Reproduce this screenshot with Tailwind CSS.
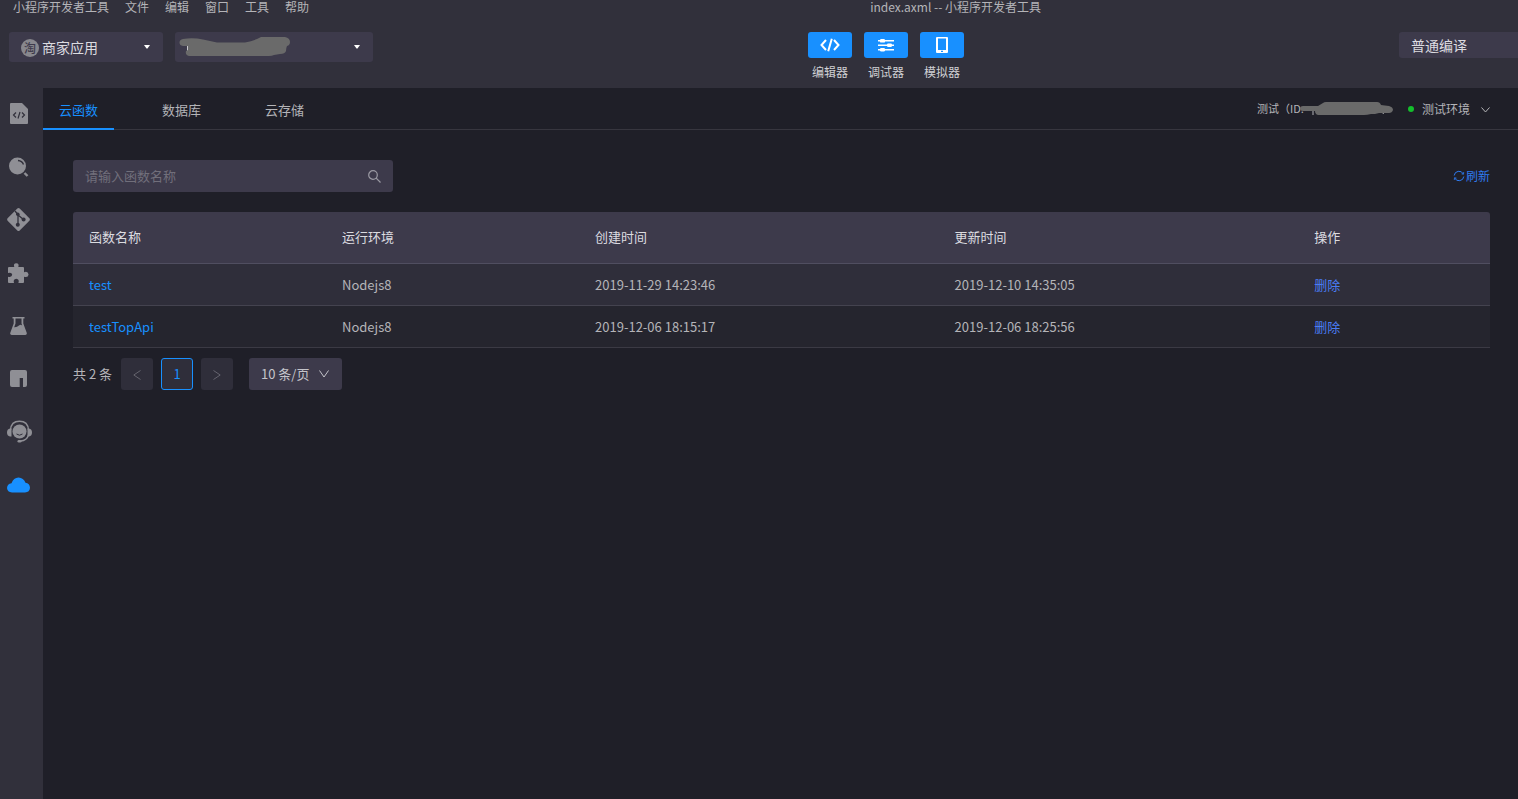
<!DOCTYPE html>
<html lang="zh-CN">
<head>
<meta charset="utf-8">
<meta name="viewport" content="width=device-width, initial-scale=1">
<title>index.axml -- 小程序开发者工具</title>
<script src="https://cdn.jsdelivr.net/npm/@tailwindcss/browser@4"></script>
</head>
<body class="flex min-h-screen flex-col bg-[#31303b] font-['Noto_Sans_CJK_SC',sans-serif] text-[13px] text-[#b4b4b8]">

<header class="flex h-[88px] shrink-0 flex-col">
  <div class="flex h-8 items-start">
    <nav aria-label="主菜单" class="flex flex-1 gap-4 pl-[13px] text-xs leading-[13px]">
      <button type="button">小程序开发者工具</button>
      <button type="button">文件</button>
      <button type="button">编辑</button>
      <button type="button">窗口</button>
      <button type="button">工具</button>
      <button type="button">帮助</button>
    </nav>
    <h1 class="mr-[477px] text-xs leading-[13px]">index.axml -- 小程序开发者工具</h1>
  </div>

  <div class="grid grid-cols-[808fr_156px_554fr] items-start">
    <div class="flex gap-3 pl-[9px]">
      <div class="relative">
        <select aria-label="应用类型" class="h-[30px] w-[154px] appearance-none rounded-[3px] bg-[#3d3a4b] pl-[33px] text-sm text-[#dcdce0]">
          <option>商家应用</option>
        </select>
        <span class="pointer-events-none absolute top-[7px] left-3 flex size-[18px] items-center justify-center rounded-full bg-[#88888e] text-xs leading-none font-medium text-[#3d3a4b]">淘</span>
        <svg class="pointer-events-none absolute top-[13px] right-[13px]" width="6" height="4" viewBox="0 0 6 4" fill="#fff"><path d="M0 0h6L3.500 3.500h-1z"/></svg>
      </div>
      <div class="relative">
        <select aria-label="项目" class="h-[30px] w-[198px] appearance-none rounded-[3px] bg-[#3d3a4b] pl-3 text-sm text-[#dcdce0]">
          <option></option>
        </select>
        <svg class="pointer-events-none absolute top-[5px] left-1" width="112" height="20" viewBox="0 0 112 20"><path d="M8.500 8v6" fill="none" stroke="#c8c8cc"/><path d="M4 2q10-1.500 20 .5l14 3h28q7-1.500 12-3.500l4-2h24q5 1 5 5 0 3-3 4-1 2-1 5-1 3-6 3l-6 1q-2 1-5 1H10q-4-1-3-5l2-1V9H4Q.5 8.500.5 5.500T4 2z" fill="#6a6a6a"/></svg>
        <svg class="pointer-events-none absolute top-[13px] right-[13px]" width="6" height="4" viewBox="0 0 6 4" fill="#fff"><path d="M0 0h6L3.500 3.500h-1z"/></svg>
      </div>
    </div>

    <div class="flex gap-3 text-xs text-[#d0d0d4]">
      <button type="button" class="flex w-11 flex-col items-center gap-[5px]">
        <span class="flex h-[26px] w-11 items-center justify-center rounded-[3px] bg-[#1890ff]">
          <svg width="20" height="14" viewBox="0 0 20 14" fill="none" stroke="#fff" stroke-width="2"><path d="M6 2L1.500 7 6 12M14 2l4.500 5-4.500 5M11.800 .8L8.200 13.200"/></svg>
        </span>
        <span class="leading-[18px]">编辑器</span>
      </button>
      <button type="button" class="flex w-11 flex-col items-center gap-[5px]">
        <span class="flex h-[26px] w-11 items-center justify-center rounded-[3px] bg-[#1890ff]">
          <svg width="16" height="14" viewBox="0 0 16 14" fill="#fff"><path d="M0 2h16v1.500H0zM0 6.500h16V8H0zM0 11h16v1.500H0z"/><rect x="2" y="1" width="5" height="3.600" rx="1.200"/><rect x="9" y="5.400" width="5" height="3.600" rx="1.200"/><rect x="2" y="9.900" width="5" height="3.600" rx="1.200"/></svg>
        </span>
        <span class="leading-[18px]">调试器</span>
      </button>
      <button type="button" class="flex w-11 flex-col items-center gap-[5px]">
        <span class="flex h-[26px] w-11 items-center justify-center rounded-[3px] bg-[#1890ff]">
          <svg width="12" height="16" viewBox="0 0 12 16"><path fill="#fff" fill-rule="evenodd" d="M1 0h10q1 0 1 1v14q0 1-1 1H1q-1 0-1-1V1q0-1 1-1zM2 1.500V13h8V1.500zM5 13.800v1.200h2v-1.200z"/></svg>
        </span>
        <span class="leading-[18px]">模拟器</span>
      </button>
    </div>

    <div class="flex justify-end">
      <select aria-label="编译模式" class="h-[26px] w-[119px] appearance-none rounded-l-[3px] bg-[#3d3a4b] pl-3 text-sm text-[#dcdce0]">
        <option>普通编译</option>
      </select>
    </div>
  </div>
</header>

<div class="flex flex-1">
  <aside class="w-[43px] shrink-0">
    <nav aria-label="侧边栏" class="flex flex-col text-[#8f8f95]">
      <button type="button" aria-label="代码" class="flex h-[53px] items-center pb-0.5 pl-2.5">
        <svg width="18" height="21" viewBox="0 0 18 21"><path fill="currentColor" d="M1 0h11l6 6v14q0 1-1 1H1q-1 0-1-1V1q0-1 1-1z"/><path d="M6 9.500L3.500 12 6 14.500M12 9.500l2.500 2.500-2.500 2.500M10 9l-2 6.500" fill="none" stroke="#31303b" stroke-width="1.200"/></svg>
      </button>
      <button type="button" aria-label="搜索" class="flex h-[53px] items-center pb-0.5 pl-[9px]">
        <svg width="20" height="20" viewBox="0 0 20 20"><circle cx="8.500" cy="9" r="8.500" fill="currentColor"/><path d="M9 3.500q4 .3 5.500 4" fill="none" stroke="#31303b" stroke-width="1.400"/><path d="M15.500 16l3 3" stroke="currentColor" stroke-width="2.400"/></svg>
      </button>
      <button type="button" aria-label="Git" class="flex h-[53px] items-center pb-0.5 pl-[7px]">
        <svg width="23" height="23" viewBox="0 0 23 23"><path fill="currentColor" d="M10.300 .6q1.200-1 2.400 0l9.700 9.700q1 1.200 0 2.400l-9.700 9.700q-1.200 1-2.400 0L.6 12.700q-1-1.200 0-2.400z"/><path d="M8 3l3 3.500V17M11 7l5.500 4.500" fill="none" stroke="#31303b" stroke-width="1.300"/><g fill="#31303b"><circle cx="10.800" cy="6.300" r="1.800"/><circle cx="10.800" cy="16.800" r="2"/><circle cx="16.600" cy="11.600" r="2"/></g></svg>
      </button>
      <button type="button" aria-label="扩展" class="flex h-[53px] items-center pb-0.5 pl-2">
        <svg width="21" height="20" viewBox="0 0 21 20" fill="currentColor"><path d="M0 5q0-1 1-1h5.300Q5 .5 8.300 .2q3.200.3 2 3.800H15q1 0 1 1v4.200q4-1.400 4.600 2.300-.5 3.600-4.600 2.200V19q0 1-1 1h-4.600q1.300-3.800-2.100-4.200-3.500.4-2.300 4.200H1q-1 0-1-1v-5.300q3.800 1 4.200-1.900Q3.800 8.800 0 10z"/></svg>
      </button>
      <button type="button" aria-label="实验" class="flex h-[53px] items-center pb-0.5 pl-2.5">
        <svg width="17" height="18" viewBox="0 0 17 18"><path fill="currentColor" d="M2.500 0h12v1.500h-1.200v5l3.500 9.500q.3 2-1.500 2H1.700q-1.800 0-1.500-2l3.500-9.500v-5H2.500z"/><path fill="#31303b" d="M5.500 1.500h6v5l.7 2q-1.800-1.600-3.200 0-2.200 2-4.800 1.700l1.300-3.700z"/></svg>
      </button>
      <button type="button" aria-label="npm" class="flex h-[53px] items-center pb-0.5 pl-2.5">
        <svg width="17" height="17" viewBox="0 0 17 17"><path fill="currentColor" d="M2 0h13q2 0 2 2v13q0 2-2 2h-2V8H9.700v9H2q-2 0-2-2V2q0-2 2-2z"/></svg>
      </button>
      <button type="button" aria-label="客服" class="flex h-[53px] items-center pb-0.5 pl-[7px]">
        <svg width="25" height="23" viewBox="0 0 25 23"><circle cx="12.500" cy="11.500" r="7" fill="currentColor"/><path d="M3.500 10Q4 1.200 12.500 1.200T21.500 10M21.500 15q-1.500 5.500-8 6" fill="none" stroke="currentColor" stroke-width="1.400"/><path fill="currentColor" d="M4.500 8.500v8H3Q0 16 0 12.500t3-4zM20.500 8.500v8H22q3-.5 3-4t-3-4z"/><rect x="10.500" y="20" width="4" height="2.600" rx="1.300" fill="currentColor"/><path d="M9.500 14q3 2.400 6 0" fill="none" stroke="#31303b"/></svg>
      </button>
      <button type="button" aria-label="云服务" class="flex h-[53px] items-center pb-0.5 pl-[7px] text-[#1890ff]">
        <svg width="23" height="16" viewBox="0 0 23 16" fill="currentColor"><path d="M5 15.500Q.3 15.200 0 11q.2-4 4.500-4.700Q6.500.8 11.500.5q5 .3 7 5.300 4.200.7 4.500 5-.3 4.500-5 4.700z"/></svg>
      </button>
    </nav>
  </aside>

  <main class="min-w-0 flex-1 bg-[#1f1f28]">
    <div class="flex h-[42px] items-stretch justify-between border-b border-[#37363f] pr-7">
      <div role="tablist" class="-mb-px flex gap-8">
        <button type="button" role="tab" aria-selected="true" class="border-b-2 border-[#1890ff] px-4 pt-1 text-[#1890ff]">云函数</button>
        <button type="button" role="tab" aria-selected="false" class="border-b-2 border-transparent px-4 pt-1">数据库</button>
        <button type="button" role="tab" aria-selected="false" class="border-b-2 border-transparent px-4 pt-1">云存储</button>
      </div>
      <div class="flex items-center text-xs">
        <div class="relative w-[136px] text-[11px]">
          <span>测试（ID:</span>
          <svg class="absolute top-0 right-0" width="93" height="17" viewBox="0 0 93 17"><path d="M84 5q2 4-1 8M13 9v5" fill="none" stroke="#b4b4b8"/><path d="M3 5h15l5-3q1-1 3-1h51q3 0 4 3l8 1q4 1 4 4-1 3-4 3l-10 0-4 1H71q-4 1-7 1H18q-3-1-3-4H3Q0 10 0 7.500T3 5z" fill="#6a6a6a"/></svg>
        </div>
        <span class="mr-2 ml-[15px] size-1.5 rounded-full bg-[#14bf2c]"></span>
        <div class="relative">
          <select aria-label="环境" class="w-[68px] appearance-none bg-[#1f1f28]">
            <option>测试环境</option>
          </select>
          <svg class="pointer-events-none absolute top-1.5 right-0" width="9" height="6" viewBox="0 0 9 6" fill="none" stroke="#b4b4b8"><path d="M.5 .5l4 4.500 4-4.500"/></svg>
        </div>
      </div>
    </div>

    <div class="pt-[30px] pr-7 pl-[30px]">
      <div class="flex items-center justify-between">
        <div class="relative">
          <input type="text" aria-label="函数名称" placeholder="请输入函数名称" class="h-8 w-80 rounded-[3px] bg-[#3d3a4b] pr-8 pb-0.5 pl-3 placeholder:text-[#716f7b]">
          <svg class="pointer-events-none absolute top-2.5 right-3" width="13" height="13" viewBox="0 0 13 13" fill="none" stroke="#9b9aa3" stroke-width="1.200"><circle cx="5" cy="5" r="4.300"/><path d="M8.200 8.200l4.300 4.300"/></svg>
        </div>
        <button type="button" class="flex items-center gap-px text-xs text-[#2f7bf0]">
          <svg width="12" height="12" viewBox="0 0 12 12" fill="none" stroke="currentColor"><path d="M1.200 5.500A4.800 4.800 0 0 1 10.300 4M10.800 6.500A4.800 4.800 0 0 1 1.700 8"/><path d="M10.700 2l-.2 2.300-2-.4M1.300 10l.2-2.300 2 .4" stroke-width=".8"/></svg>
          刷新
        </button>
      </div>

      <table class="mt-5 w-full table-fixed border-separate border-spacing-0 text-left">
        <colgroup><col class="w-5/28"><col class="w-5/28"><col class="w-17/67"><col class="w-17/67"><col></colgroup>
        <thead>
          <tr class="h-[52px] text-[#dcdce0] *:border-b *:border-[#504e60] *:bg-[#3d3a4b] *:px-4 *:pb-0.5 *:font-normal">
            <th scope="col" class="rounded-tl-[3px]">函数名称</th>
            <th scope="col">运行环境</th>
            <th scope="col">创建时间</th>
            <th scope="col">更新时间</th>
            <th scope="col" class="rounded-tr-[3px]">操作</th>
          </tr>
        </thead>
        <tbody>
          <tr class="h-[42px] *:border-b *:border-[#44434f] *:bg-[#2f2e3a] *:px-4">
            <td><a href="#test" class="text-[#1890ff]">test</a></td>
            <td>Nodejs8</td>
            <td>2019-11-29 14:23:46</td>
            <td>2019-12-10 14:35:05</td>
            <td><button type="button" class="text-[#4a7df5]">删除</button></td>
          </tr>
          <tr class="h-[42px] *:border-b *:border-[#3b3a44] *:bg-[#25252e] *:px-4">
            <td><a href="#testTopApi" class="text-[#1890ff]">testTopApi</a></td>
            <td>Nodejs8</td>
            <td>2019-12-06 18:15:17</td>
            <td>2019-12-06 18:25:56</td>
            <td><button type="button" class="text-[#4a7df5]">删除</button></td>
          </tr>
        </tbody>
      </table>

      <nav aria-label="分页" class="mt-2.5 flex items-center gap-2">
        <span class="min-w-10">共 2 条</span>
        <button type="button" aria-label="上一页" disabled class="flex size-8 items-center justify-center rounded-[3px] bg-[#2f2e3a] pt-0.5">
          <svg width="8" height="10" viewBox="0 0 8 10" fill="none" stroke="#65646e"><path d="M7.500 .5L.8 5l6.700 4.500"/></svg>
        </button>
        <button type="button" aria-current="page" class="size-8 rounded-[3px] border border-[#1890ff] bg-[#2f2e3a] text-[#1890ff]">1</button>
        <button type="button" aria-label="下一页" disabled class="flex size-8 items-center justify-center rounded-[3px] bg-[#2f2e3a] pt-0.5">
          <svg width="8" height="10" viewBox="0 0 8 10" fill="none" stroke="#65646e"><path d="M.5 .5L7.200 5 .5 9.500"/></svg>
        </button>
        <div class="relative ml-2">
          <select aria-label="每页条数" class="h-8 w-[93px] appearance-none rounded-[3px] bg-[#3d3a4b] pl-3 text-[#c4c4ca]">
            <option>10 条/页</option>
          </select>
          <svg class="pointer-events-none absolute top-3 right-[13px]" width="10" height="8" viewBox="0 0 10 8" fill="none" stroke="#c4c4ca"><path d="M.5 .5L5 7 9.500 .5"/></svg>
        </div>
      </nav>
    </div>
  </main>
</div>
</body>
</html>
